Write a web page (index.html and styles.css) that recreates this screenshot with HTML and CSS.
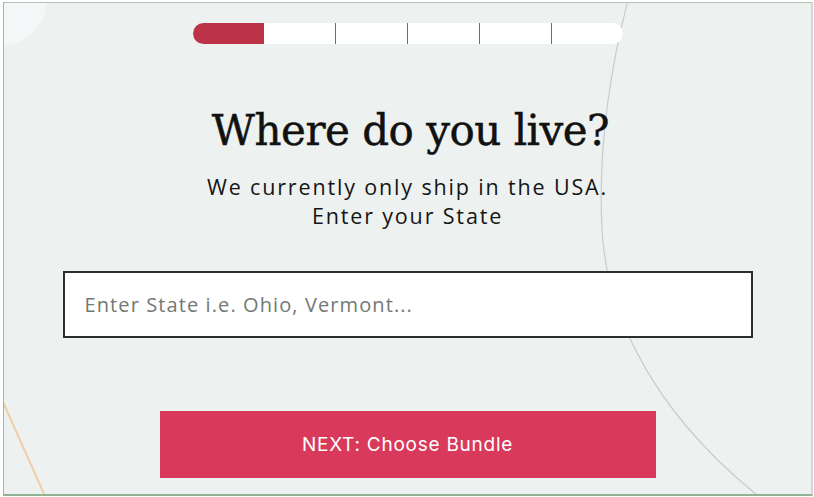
FILE: index.html
```html
<!DOCTYPE html>
<html lang="en">
<head>
<meta charset="utf-8">
<title>Where do you live?</title>
<link rel="stylesheet" href="styles.css">
</head>
<body>
<div class="frame">
  <svg class="deco" width="810" height="494" viewBox="0 0 810 494" aria-hidden="true">
    <circle cx="-4" cy="-4" r="47" fill="#ffffff" fill-opacity="0.42"/>
    <path d="M624,-3 C606,67 594,147 598,227 C602,297 636,397 753,492" fill="none" stroke="#c9cccb" stroke-width="1.2"/>
    <path d="M-1,399 Q18,442 41,493" fill="none" stroke="#efcca8" stroke-width="2"/>
  </svg>
  <main class="content">
    <div class="progress">
      <span class="seg done"></span>
      <span class="seg"></span>
      <span class="seg mark"></span>
      <span class="seg mark"></span>
      <span class="seg mark"></span>
      <span class="seg mark"></span>
    </div>
    <h1 class="title">Where do you live?</h1>
    <p class="sub">We currently only ship in the USA.<br>Enter your State</p>
    <input class="state" type="text" placeholder="Enter State i.e. Ohio, Vermont...">
    <button class="next" type="button">NEXT: Choose Bundle</button>
  </main>
</div>
</body>
</html>
```

FILE: styles.css
```css
html, body {
  margin: 0;
  padding: 0;
  background: #ffffff;
}
.frame {
  position: relative;
  margin: 2px 1px 1px 3px;
  height: 491px;
  background: #edf2f1;
  border-top: 1px solid #b3c6b6;
  border-left: 1px solid #a9b1ac;
  border-right: 2px solid #d2d6d4;
  border-bottom: 2px solid #8fb394;
  overflow: hidden;
}
.deco {
  position: absolute;
  left: 0;
  top: 0;
}
.content {
  position: relative;
  display: flex;
  flex-direction: column;
  align-items: center;
  padding-top: 20px;
}
.progress {
  display: flex;
  width: 430px;
  height: 21px;
  background: #ffffff;
  border-radius: 11px;
  overflow: hidden;
}
.seg {
  flex: 1;
  box-sizing: border-box;
}
.seg.done {
  background: #bc3247;
}
.seg.mark {
  border-left: 1px solid #d83a55;
}
.title {
  margin: 62px 0 0;
  padding-left: 6px;
  font-family: "DejaVu Serif", serif;
  font-weight: normal;
  font-size: 42px;
  line-height: 50px;
  color: #111111;
  letter-spacing: -0.5px;
  -webkit-text-stroke: 0.5px #111111;
}
.sub {
  margin: 16px 0 0;
  font-family: "Open Sans", sans-serif;
  font-size: 21.5px;
  line-height: 29px;
  text-align: center;
  color: #151515;
  letter-spacing: 1.85px;
}
.state {
  margin-top: 41px;
  width: 690px;
  height: 67px;
  box-sizing: border-box;
  border: 2px solid #2e2e2e;
  background: #ffffff;
  padding: 0 20px;
  font-family: "Open Sans", sans-serif;
  font-size: 20px;
  color: #333333;
  outline: none;
}
.state::placeholder {
  color: #737875;
  letter-spacing: 1.1px;
}
.next {
  margin-top: 73px;
  width: 496px;
  height: 67px;
  border: none;
  background: #d9395b;
  color: #ffffff;
  font-family: "Inter", sans-serif;
  font-size: 19px;
  letter-spacing: 0.75px;
  cursor: pointer;
}
```
